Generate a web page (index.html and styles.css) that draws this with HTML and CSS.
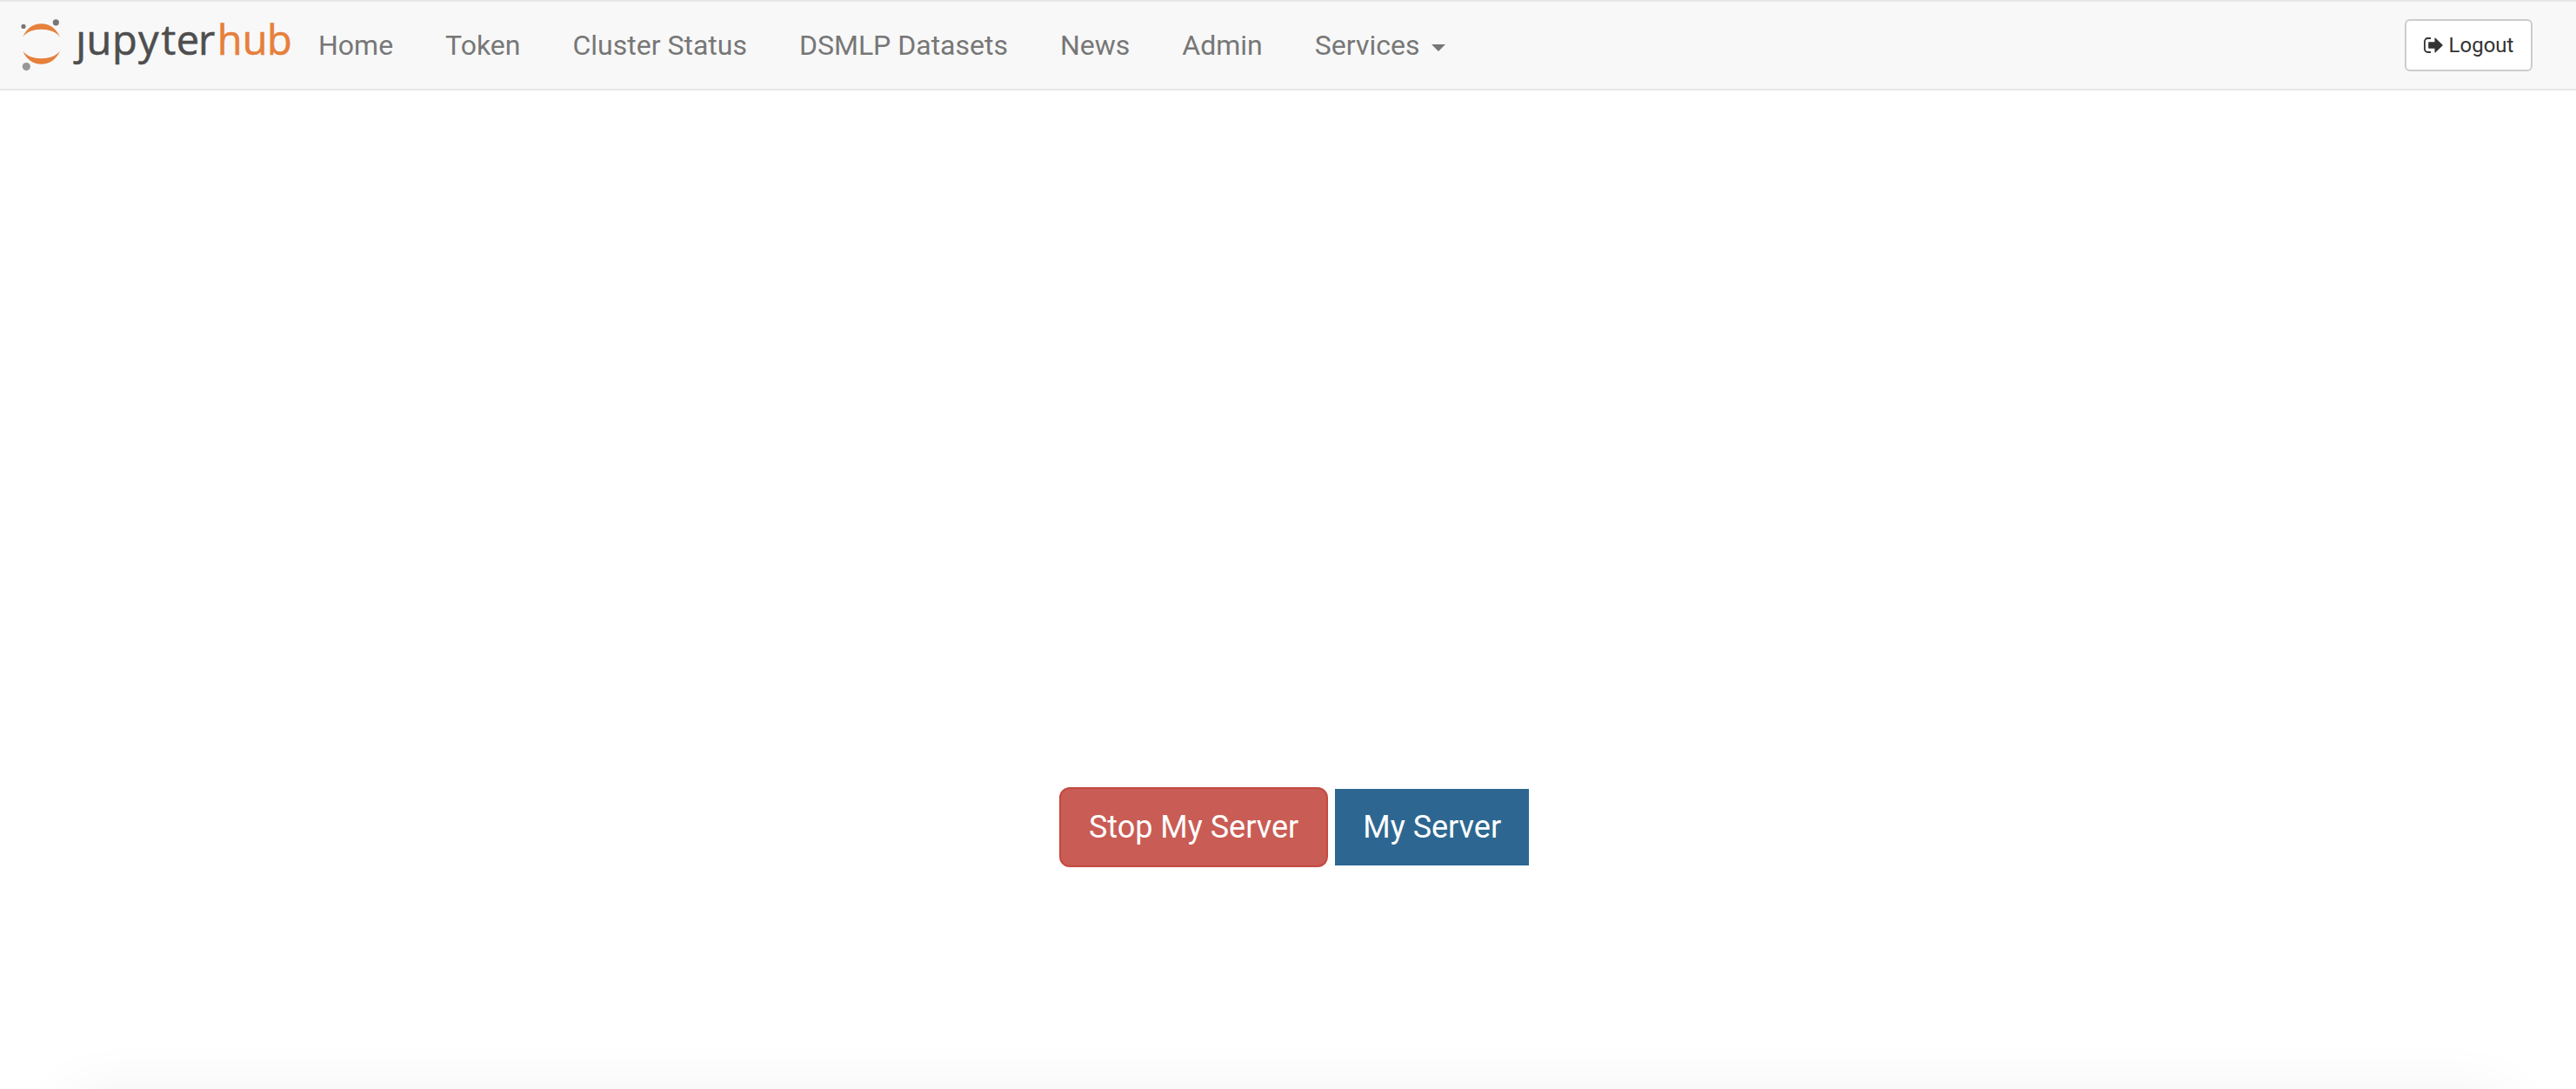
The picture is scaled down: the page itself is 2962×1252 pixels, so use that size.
FILE: index.html
```html
<!DOCTYPE html>
<html lang="en">

<head>
    <meta charset="UTF-8">
    <meta name="viewport" content="width=device-width, initial-scale=1.0">
    <title>JupyterHub</title>
    <link rel="stylesheet" href="styles.css">
</head>

<body>

    <nav class="navbar">
        <a class="logo" href="#">
            <svg width="340" height="100" viewBox="0 0 340 100">
                <g fill="#e6803c">
                    <path d="M26.3 40.5C30 31 38 25.2 47.5 25.2S65 31 69 40.5C64 34.5 56.5 31.8 47.5 31.8S31 34.5 26.3 40.5z"/>
                    <path d="M26.3 56.7C31 62.5 38.5 65.2 47.5 65.2S64 62.5 69 56.7C65 66 57 71.8 47.5 71.8S30 66 26.3 56.7z"/>
                </g>
                <circle cx="64.3" cy="23.8" r="3.6" fill="#767677"/>
                <circle cx="27" cy="28.4" r="2.6" fill="#767677"/>
                <circle cx="30.3" cy="74.6" r="4.6" fill="#989798"/>
                <text class="logo-text" x="87.3 99.4 129 159 185.4 202.7 228" y="60.6" fill="#4e4e4e" stroke="#4e4e4e">ȷupyter</text>
                <text class="logo-text" x="249.7 278.7 307" y="60.6" fill="#e6803c" stroke="#e6803c">hub</text>
            </svg>
        </a>
        <ul class="nav-links">
            <li><a href="#">Home</a></li>
            <li><a href="#">Token</a></li>
            <li><a href="#">Cluster Status</a></li>
            <li><a href="#">DSMLP Datasets</a></li>
            <li><a href="#">News</a></li>
            <li><a href="#">Admin</a></li>
            <li><a href="#">Services<span class="caret"></span></a></li>
        </ul>
        <a class="logout" href="#">
            <svg width="22" height="18" viewBox="0 0 22 18">
                <path d="M8 1H4.5A3.5 3.5 0 0 0 1 4.5v9A3.5 3.5 0 0 0 4.5 17H8" fill="none" stroke="#333" stroke-width="1.8"/>
                <path d="M6 5.2h6.5V1.2q0-1.2 1-.4l7.8 7.5q.6.7 0 1.4l-7.8 7.5q-1 .8-1-.4V12.8H6q-.8 0-.8-.8V6q0-.8.8-.8z" fill="#333"/>
            </svg>
            Logout
        </a>
    </nav>

    <main>
        <a class="btn btn-danger" href="#">Stop My Server</a>
        <a class="btn btn-primary" href="#">My Server</a>
    </main>

    <footer></footer>

</body>

</html>
```

FILE: styles.css
```css
body {
    font-family: Roboto, "Liberation Sans", sans-serif;
    margin: 0;
    background-color: #ffffff;
    display: flex;
    flex-direction: column;
    height: 100vh;
    overflow: hidden;
}

a {
    text-decoration: none;
}

.navbar {
    display: flex;
    align-items: center;
    box-sizing: border-box;
    height: 104px;
    padding-right: 50px;
    background-color: #f8f8f8;
    border-top: 2px solid #e7e7e7;
    border-bottom: 2px solid #e7e7e7;
}

.logo svg {
    display: block;
}

.logo-text {
    font-family: "Open Sans", "Noto Sans", sans-serif;
    font-size: 47px;
    stroke-width: 0.6px;
}

.nav-links {
    display: flex;
    flex: 1;
    margin: 0 0 0 -4px;
    padding: 0;
    list-style: none;
}

.nav-links a {
    display: block;
    padding: 0 30px;
    font-size: 32px;
    line-height: 40px;
    color: #777777;
}

.caret {
    display: inline-block;
    margin-left: 14px;
    vertical-align: middle;
    border-top: 8px solid #777777;
    border-left: 8px solid transparent;
    border-right: 8px solid transparent;
}

.logout {
    display: flex;
    align-items: center;
    justify-content: center;
    gap: 7px;
    box-sizing: border-box;
    width: 147px;
    height: 60px;
    font-size: 24px;
    color: #333333;
    background-color: #ffffff;
    border: 2px solid #cccccc;
    border-radius: 6px;
}

/* Server buttons sit below the middle of the page */
main {
    flex: 1;
    display: flex;
    justify-content: center;
    align-items: flex-start;
    gap: 6px;
    padding: 801px 0 0 16px;
}

.btn {
    box-sizing: border-box;
    height: 92px;
    padding: 0 32px;
    font-size: 36px;
    line-height: 88px;
    color: #ffffff;
    border: 2px solid transparent;
}

.btn-danger {
    background-color: #c95c54;
    border-color: #c34a40;
    border-radius: 12px;
}

.btn-primary {
    background-color: #2d6791;
    border-color: #ffffff;
}

/* Soft shadow along the bottom edge */
footer {
    height: 1px;
    margin: 0 155px -1px;
    box-shadow: 0 83px 75px 70px rgba(0, 0, 0, 0.08);
}
```
